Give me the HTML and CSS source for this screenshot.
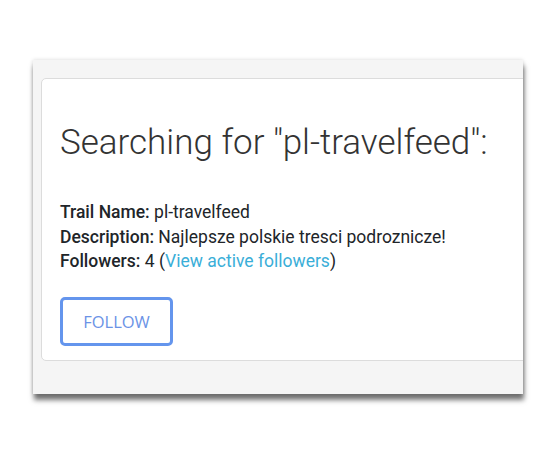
FILE: index.html
```html
<!DOCTYPE html>
<html>
<head>
<meta charset="utf-8">
<link rel="stylesheet" href="styles.css">
</head>
<body>
<div class="panel">
  <div class="card">
    <h1 class="title">Searching for "pl-travelfeed":</h1>
    <div class="info">
      <div class="line"><b>Trail Name:</b> pl-travelfeed</div>
      <div class="line"><b>Description:</b> Najlepsze polskie tresci podroznicze!</div>
      <div class="line"><b>Followers:</b> 4 (<a class="link" href="#">View active followers</a>)</div>
    </div>
    <button class="follow">FOLLOW</button>
  </div>
</div>
</body>
</html>
```

FILE: styles.css
```css
html, body {
  margin: 0;
  padding: 0;
  background: #ffffff;
}
body {
  font-family: Roboto, "Liberation Sans", sans-serif;
  color: #212529;
  padding-top: 60px;
  padding-left: 33px;
  padding-bottom: 40px;
}
.panel {
  width: 490px;
  height: 334px;
  box-sizing: border-box;
  background: #f5f5f5;
  padding: 18px 0 0 8px;
  overflow: hidden;
  box-shadow: 1px 6px 5px rgba(0,0,0,0.55), 0 0 4px rgba(0,0,0,0.15);
}
.card {
  width: 520px;
  height: 283px;
  box-sizing: border-box;
  background: #ffffff;
  border: 1px solid #dcdcdc;
  border-radius: 5px;
  padding: 43px 18px 0 18px;
}
.title {
  margin: 0;
  font-weight: 300;
  font-size: 35px;
  line-height: 42px;
  color: #333;
}
.info {
  margin-top: 36px;
  font-size: 17.5px;
  line-height: 24.5px;
}
.info b {
  font-weight: 500;
}
.link {
  color: #3aaed8;
  text-decoration: none;
}
.follow {
  display: block;
  margin-top: 23px;
  width: 113px;
  height: 49px;
  background: #fff;
  border: 3px solid #6495ed;
  border-radius: 5px;
  color: #6b93e6;
  font-family: "Open Sans", sans-serif;
  font-size: 16.5px;
  padding: 0;
}
```
